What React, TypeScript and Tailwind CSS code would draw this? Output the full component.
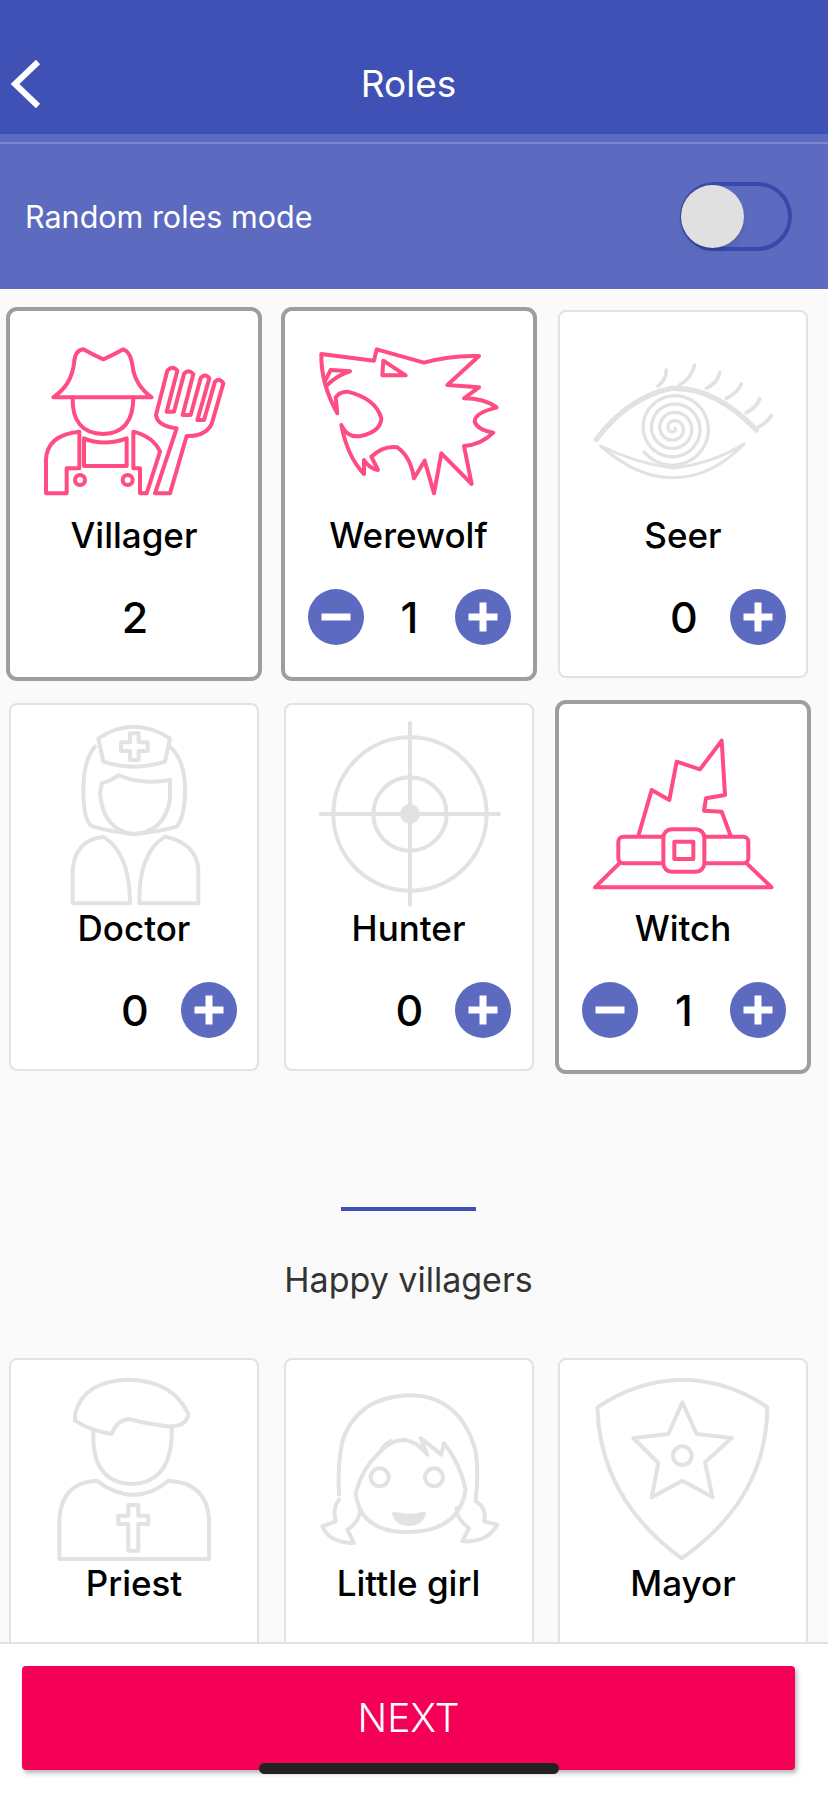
import React from "react";

const PINK = "#ff4d84";
const GRAY = "#e2e2e2";

// spiral pupil of the seer's eye
const spiral = (() => {
  const pts: string[] = [];
  for (let a = 0; a <= Math.PI * 2 * 4.4; a += 0.15) {
    const r = 4 + (a / (Math.PI * 2)) * 25;
    pts.push(`${(347 + r * Math.cos(a)).toFixed(1)} ${(355 + r * Math.sin(a)).toFixed(1)}`);
  }
  return "M" + pts.join(" L");
})();

const Farmer = () => (
  <>
    <path d="M160 292 Q215 255 222 190 Q225 150 250 148 Q280 165 310 178 Q340 165 370 148 Q392 155 398 200 Q405 255 455 292 Z" />
    <path d="M218 292 Q215 400 310 402 Q400 400 400 292" />
    <path d="M252 415 Q310 440 380 415 V498 H252 Z" />
    <path d="M238 395 Q140 405 138 480 V580 H200 V505 H238 Z" />
    <path d="M400 395 Q460 410 480 455 L440 580 H420 V505 H400 Z" />
    <circle cx="240" cy="540" r="15" />
    <circle cx="383" cy="540" r="15" />
    <path d="M530 385 Q472 378 468 345 L502 212 Q518 195 532 212 L500 335 H522 L552 222 Q565 205 580 222 L548 345 H572 L602 235 Q615 218 628 235 L592 360 H612 L645 245 Q660 232 670 250 L635 372 Q615 410 560 408 L510 580 H465 Z" />
  </>
);

const Wolf = () => (
  <>
    <path d="M112 132 L270 152 L278 118 L420 158 Q500 135 585 138 L490 225 L585 232 L540 265 Q600 265 638 292 Q570 310 572 335 Q580 360 628 368 Q590 405 540 408 L563 522 L472 430 L450 550 L422 452 L390 505 Q380 440 340 412 Q300 405 262 440 L282 480 Q255 475 240 450 L240 492 Q190 440 172 345 Q190 385 230 378 Q290 365 292 325 Q275 265 190 245 Q165 245 155 262 L160 310 Q110 220 112 132 Z" />
    <path d="M298 152 L365 196 L295 196 Z" />
    <path d="M122 215 L140 180 L198 184 Q160 195 130 225" />
  </>
);

const Eye = () => (
  <>
    <path strokeWidth="10" d={spiral} />
    <path strokeWidth="16" d="M115 388 Q210 262 340 235 Q470 230 595 360" />
    <path strokeWidth="9" d="M128 408 Q240 505 345 503 Q460 503 558 402" />
    <path strokeWidth="9" d="M128 408 Q240 462 345 474 Q460 462 558 402" />
    <path strokeWidth="11" d="M300 228 Q325 210 325 180 M365 225 Q400 205 410 165 M445 235 Q480 218 485 188 M505 265 Q540 248 550 222 M565 308 Q595 293 605 267 M600 352 Q630 335 640 317" />
  </>
);

const Nurse = () => (
  <>
    <path d="M285 170 Q250 210 250 300 Q250 400 280 410 Q330 425 400 432 Q480 425 530 410 Q555 380 555 300 Q555 210 510 170" />
    <path d="M295 145 Q400 75 510 145 L495 215 Q400 245 310 215 Z" />
    <path d="M390 130 H416 V157 H443 V183 H416 V210 H390 V183 H363 V157 H390 Z" />
    <path d="M305 280 Q340 270 355 255 Q420 285 510 270 L510 330 Q490 430 400 432 Q310 420 300 310 Z" />
    <path d="M218 640 V540 Q225 450 310 440 Q390 490 390 640 Z" />
    <path d="M418 640 Q415 490 495 440 Q590 460 595 540 V640 Z" />
  </>
);

const Target = () => (
  <>
    <circle cx="378" cy="333" r="230" />
    <circle cx="378" cy="333" r="110" />
    <circle cx="378" cy="333" r="24" fill={GRAY} />
    <path d="M110 333 H645 M378 60 V605" />
  </>
);

const Hat = () => (
  <>
    <path d="M628 520 L555 592 H1085 L1010 520" />
    <path d="M685 438 L725 300 L778 330 L800 215 L870 238 L935 152 L945 315 L888 325 L882 362 L935 365 L962 438" />
    <rect x="625" y="440" width="390" height="80" rx="15" />
    <rect x="760" y="418" width="123" height="127" rx="25" fill="#fff" />
    <rect x="793" y="455" width="57" height="52" />
  </>
);

const PriestIcon = () => (
  <>
    <path d="M225 225 Q250 125 385 122 Q520 125 565 225 Q560 265 500 262 Q440 255 385 240 Q350 245 335 285 Q270 275 225 245 Z" />
    <path d="M280 280 Q275 430 395 435 Q520 430 515 265" />
    <path d="M178 660 V540 Q185 430 290 425 Q340 465 400 468 Q460 465 505 425 Q620 430 627 540 V660 Z" />
    <path d="M385 498 H415 V530 H445 V555 H415 V635 H385 V555 H355 V530 H385 Z" />
  </>
);

const Girl = () => (
  <>
    <path d="M165 410 Q160 320 175 250 Q220 115 380 112 Q530 115 575 280 Q585 340 575 425" />
    <path d="M165 425 Q145 450 155 490 L115 505 Q135 555 210 555 L190 515 Q230 490 228 450" />
    <path d="M575 430 Q610 450 600 490 L640 500 Q610 555 535 550 L555 510 Q515 480 518 450" />
    <path d="M285 285 Q235 330 215 405 Q230 525 375 522 Q525 520 545 395 Q530 320 480 255 L472 290 L445 268 L410 240 L430 290 Q400 250 360 245 Q320 245 285 285" />
    <path stroke="none" fill={GRAY} d="M280 292 Q290 250 328 242 Q300 265 280 292 Z" />
    <circle cx="287" cy="358" r="27" />
    <circle cx="450" cy="358" r="27" />
    <path fill={GRAY} d="M330 467 Q375 480 420 467 Q410 498 375 498 Q340 498 330 467 Z" />
  </>
);

const Shield = () => (
  <>
    <path d="M562 205 Q680 125 815 122 Q960 125 1072 205 Q1070 480 815 658 Q570 480 562 205 Z" />
    <path d="M817 190 L860 285 L965 297 L885 370 L908 475 L817 425 L725 475 L745 372 L670 297 L775 285 Z" />
    <circle cx="817" cy="350" r="28" />
  </>
);

type Role = {
  name: string;
  count?: number;
  box: string;
  icon: React.ReactNode;
  selected?: boolean;
  locked?: boolean;
};

const topRoles: Role[] = [
  { name: "Villager", count: 2, box: "27 30 750 615", icon: <Farmer />, selected: true, locked: true },
  { name: "Werewolf", count: 1, box: "0 0 750 615", icon: <Wolf />, selected: true },
  { name: "Seer", count: 0, box: "0 0 750 615", icon: <Eye /> },
  { name: "Doctor", count: 0, box: "27 39 750 615", icon: <Nurse /> },
  { name: "Hunter", count: 0, box: "0 0 750 615", icon: <Target /> },
  { name: "Witch", count: 1, box: "444 39 750 615", icon: <Hat />, selected: true },
];

const happyRoles: Role[] = [
  { name: "Priest", box: "27 57 750 615", icon: <PriestIcon /> },
  { name: "Little girl", box: "0 0 750 615", icon: <Girl /> },
  { name: "Mayor", box: "444 57 750 615", icon: <Shield /> },
];

const RoundButton = ({ plus }: { plus?: boolean }) => (
  <button className="w-14 h-14 rounded-full bg-[#5c6bc0] flex items-center justify-center">
    <svg width="30" height="30" viewBox="0 0 30 30" fill="#fff">
      <rect x="0.5" y="11.5" width="29" height="7" />
      {plus && <rect x="11.5" y="0.5" width="7" height="29" />}
    </svg>
  </button>
);

const RoleCard = ({ role }: { role: Role }) => {
  const color = role.selected ? PINK : GRAY;
  return (
    <div
      className={
        role.selected
          ? "h-[368px] rounded-[8px] bg-white border-2 border-white outline-4 -outline-offset-1 outline-[#9e9e9e] flex flex-col items-center"
          : "h-[368px] rounded-[8px] bg-white border-2 border-[#e2e2e2] flex flex-col items-center"
      }
    >
      <svg
        className="w-[250px] h-[205px] shrink-0 -mt-[2px]"
        viewBox={role.box}
        fill="none"
        stroke={color}
        strokeWidth="12"
        strokeLinejoin="round"
        strokeLinecap="round"
      >
        {role.icon}
      </svg>
      <div className="h-10 leading-10 text-[35px] font-medium text-black whitespace-nowrap">{role.name}</div>
      {role.count !== undefined && (
        <div className="mt-[34px] w-full h-14 pl-[22px] pr-[20px] flex items-center justify-between">
          {role.count > 0 && !role.locked ? <RoundButton /> : <div className="w-14" />}
          <span className="text-[43px] font-medium text-black">{role.count}</span>
          {role.locked ? <div className="w-14" /> : <RoundButton plus />}
        </div>
      )}
    </div>
  );
};

export default function App() {
  return (
    <div className="relative w-[828px] h-[1793px] flex flex-col overflow-hidden bg-[#fafafa] font-['Inter',sans-serif]">
      <header className="h-[134px] shrink-0 bg-[#3f51b5] relative flex items-center justify-center pr-[11px] pt-[34px]">
        <svg className="absolute left-[10px] top-[58px]" width="32" height="52" viewBox="0 0 32 52" fill="none" stroke="#fff" strokeWidth="6">
          <path d="M28 4 L5 26 L28 48" />
        </svg>
        <h1 className="text-[37px] font-normal text-white">Roles</h1>
      </header>

      <div className="h-[155px] shrink-0 bg-[#5c6bc0] flex flex-col">
        <div className="h-2 shrink-0" />
        <div className="h-[2px] shrink-0 bg-[#7a89d2]" />
        <div className="flex-1 flex items-center justify-between pl-[25px] pr-[36px]">
          <span className="text-[30.5px] text-white">Random roles mode</span>
          <div className="w-[112px] h-[69px] rounded-full border-4 border-[#3949ab] flex items-center">
            <div className="w-[63px] h-[63px] -ml-[3px] rounded-full bg-[#e0e0e0] shadow-md" />
          </div>
        </div>
      </div>

      <main className="flex-1 min-h-0 overflow-hidden pl-[9px] pt-[21px]">
        <div className="w-[799px]">
          <div className="grid grid-cols-[250px_250px_250px] gap-x-[24.5px] gap-y-[25px]">
            {topRoles.map((role) => (
              <RoleCard key={role.name} role={role} />
            ))}
          </div>

          <div className="mt-[136px] mx-auto w-[135px] h-[4px] bg-[#3f51b5]" />
          <p className="mt-[47px] h-11 leading-[44px] text-center text-[34px] text-[#333] whitespace-nowrap">Happy villagers</p>
          <div className="mt-[56px] grid grid-cols-[250px_250px_250px] gap-x-[24.5px]">
            {happyRoles.map((role) => (
              <RoleCard key={role.name} role={role} />
            ))}
          </div>
        </div>
      </main>

      <footer className="h-[151px] shrink-0 bg-white border-t-2 border-[#e2e2e2] pl-[22px] pt-[22px]">
        <button className="w-[773px] h-[104px] rounded-[4px] bg-[#f50057] text-white text-[39px] font-light shadow-[2px_3px_5px_rgba(0,0,0,0.3)]">
          NEXT
        </button>
      </footer>

      <div className="absolute left-[259px] top-[1763px] w-[300px] h-[11px] rounded-full bg-[#222]" />
    </div>
  );
}
